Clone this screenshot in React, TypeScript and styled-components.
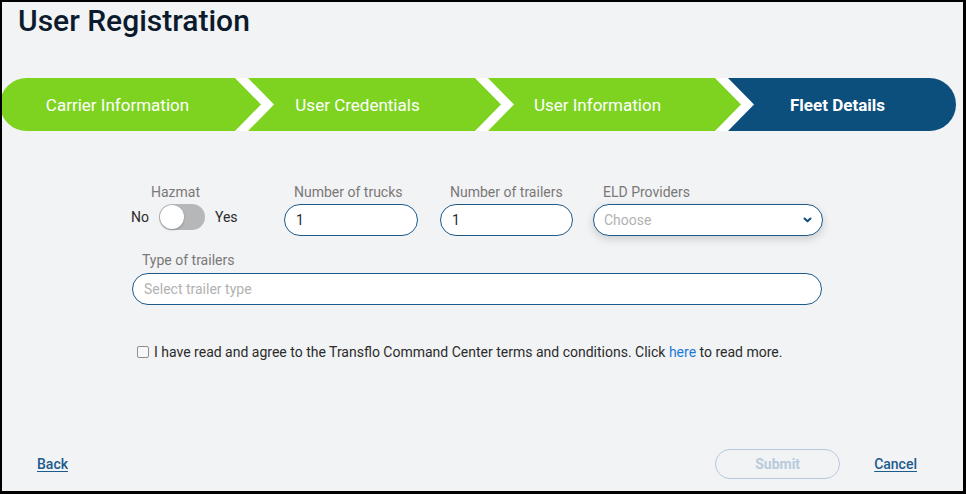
import React from "react";
import styled, { createGlobalStyle } from "styled-components";

// colours taken from the screen
const C = {
  page: "#f2f3f5",
  green: "#7ed321",
  navy: "#0c4e7c",
  border: "#1d5a8a",
  label: "#7a7877",
  text: "#2b2b2b",
  placeholder: "#b2b2b2",
  link: "#1c5b8d",
  linkBlue: "#1a7ad6",
  disabled: "#b6cadd",
};

const GlobalStyle = createGlobalStyle`
  html, body {
    margin: 0;
    padding: 0;
    background: ${C.page};
  }
  body {
    font-family: Roboto, "Liberation Sans", Arial, sans-serif;
    -webkit-font-smoothing: antialiased;
  }
`;

const Frame = styled.div`
  width: 966px;
  height: 494px;
  box-sizing: border-box;
  border: 2px solid #000;
  border-right-width: 3px;
  border-bottom-width: 3px;
  background: ${C.page};
  display: flex;
  flex-direction: column;
  overflow: hidden;
`;

const Title = styled.h1`
  margin: 0;
  padding: 2px 0 0 16px;
  font-size: 30px;
  line-height: 34px;
  font-weight: 500;
  color: #0b1a2c;
`;

// ---------- stepper ----------
const Stepper = styled.div`
  margin: 40px 0 0 -2px;
  width: 956px;
  height: 53px;
  display: flex;
  background: #fff;
  border-radius: 27px;
  overflow: hidden;
  flex-shrink: 0;
`;

type StepKind = "first" | "mid" | "last";

const CLIPS: Record<StepKind, string> = {
  first: "polygon(0 0, calc(100% - 26px) 0, 100% 50%, calc(100% - 26px) 100%, 0 100%)",
  mid: "polygon(0 0, calc(100% - 26px) 0, 100% 50%, calc(100% - 26px) 100%, 0 100%, 26px 50%)",
  last: "polygon(0 0, 100% 0, 100% 100%, 0 100%, 26px 50%)",
};

const PAD_RIGHT: Record<StepKind, number> = { first: 26, mid: 34, last: 22 };

const Step = styled.div<{ $w: number; $kind: StepKind; $active?: boolean }>`
  width: ${(p) => p.$w}px;
  flex-shrink: 0;
  height: 100%;
  margin-left: ${(p) => (p.$kind === "first" ? 0 : -13)}px;
  padding-right: ${(p) => PAD_RIGHT[p.$kind]}px;
  box-sizing: border-box;
  display: flex;
  align-items: center;
  justify-content: center;
  clip-path: ${(p) => CLIPS[p.$kind]};
  background: ${(p) => (p.$active ? C.navy : C.green)};
  color: #fff;
  font-size: 17px;
  font-weight: ${(p) => (p.$active ? 700 : 400)};
`;

// ---------- form ----------
const Form = styled.div`
  margin: 53px 0 0 129px;
  display: flex;
  flex-direction: column;
`;

const Row = styled.div<{ $mt?: number }>`
  display: flex;
  align-items: flex-start;
  margin-top: ${(p) => p.$mt ?? 0}px;
`;

const Field = styled.div<{ $w: number; $ml?: number }>`
  width: ${(p) => p.$w}px;
  margin-left: ${(p) => p.$ml ?? 0}px;
  display: flex;
  flex-direction: column;
`;

const Label = styled.label<{ $gap?: number }>`
  font-size: 14px;
  line-height: 16px;
  color: ${C.label};
  padding-left: 10px;
  margin-bottom: ${(p) => p.$gap ?? 4}px;
`;

const HazmatLabel = styled(Label)`
  padding-left: 20px;
`;

const TextInput = styled.input`
  width: 100%;
  height: 32px;
  box-sizing: border-box;
  border: 1px solid ${C.border};
  border-radius: 16px;
  background: #fff;
  padding: 0 11px;
  font-family: inherit;
  font-size: 14px;
  color: ${C.text};
  outline: none;

  &::placeholder {
    color: ${C.placeholder};
  }
`;

const SelectBox = styled.div`
  height: 32px;
  box-sizing: border-box;
  border: 1px solid ${C.border};
  border-radius: 16px;
  background: #fff;
  padding: 0 10px 0 10px;
  display: flex;
  align-items: center;
  justify-content: space-between;
  font-size: 14px;
  color: ${C.placeholder};
  box-shadow: 0 3px 8px rgba(0, 0, 0, 0.16);
`;

const ToggleRow = styled.div`
  display: flex;
  align-items: center;
  gap: 10px;
  height: 26px;
  font-size: 14px;
  color: ${C.text};
`;

const Track = styled.div<{ $on?: boolean }>`
  width: 46px;
  height: 26px;
  box-sizing: border-box;
  padding: 1px;
  border-radius: 13px;
  background: #b5b7b9;
  display: flex;
  align-items: center;
  justify-content: ${(p) => (p.$on ? "flex-end" : "flex-start")};
`;

const Knob = styled.div`
  width: 24px;
  height: 24px;
  border-radius: 50%;
  background: #fff;
  box-shadow: 0 1px 2px rgba(0, 0, 0, 0.25);
`;

const Agree = styled.div`
  margin: 39px 0 0 6px;
  display: flex;
  align-items: center;
  gap: 5px;
  font-size: 14px;
  line-height: 16px;
  color: ${C.text};
`;

const CheckBox = styled.span`
  width: 12px;
  height: 12px;
  box-sizing: border-box;
  border: 1px solid #8d8d8d;
  border-radius: 2px;
  background: #f7f7f7;
`;

const InlineLink = styled.a`
  color: ${C.linkBlue};
  text-decoration: none;
`;

// ---------- footer ----------
const Footer = styled.div`
  margin-top: auto;
  display: flex;
  align-items: center;
  padding: 0 46px 12px 35px;
`;

const TextLink = styled.a`
  font-size: 14px;
  font-weight: 500;
  color: ${C.link};
  text-decoration: underline;
  text-underline-offset: 2px;
`;

const SubmitButton = styled.button`
  margin-left: auto;
  margin-right: 34px;
  width: 125px;
  height: 30px;
  border: 1px solid ${C.disabled};
  border-radius: 15px;
  background: transparent;
  font-family: inherit;
  font-size: 14px;
  font-weight: 700;
  color: #b8cadb;
`;

const Chevron = () => (
  <svg width="9" height="6" viewBox="0 0 9 6">
    <path d="M1.5 1.5 L4.5 4.3 L7.5 1.5" fill="none" stroke={C.navy} strokeWidth="2" strokeLinecap="round" strokeLinejoin="round" />
  </svg>
);

const steps: { label: string; w: number; kind: StepKind; active?: boolean }[] = [
  { label: "Carrier Information", w: 261, kind: "first" },
  { label: "User Credentials", w: 253, kind: "mid" },
  { label: "User Information", w: 253, kind: "mid" },
  { label: "Fleet Details", w: 241, kind: "last", active: true },
];

export default function App() {
  return (
    <>
      <GlobalStyle />
      <Frame>
        <Title>User Registration</Title>

        <Stepper>
          {steps.map((s) => (
            <Step key={s.label} $w={s.w} $kind={s.kind} $active={s.active}>
              {s.label}
            </Step>
          ))}
        </Stepper>

        <Form>
          <Row>
            <Field $w={107}>
              <HazmatLabel>Hazmat</HazmatLabel>
              <ToggleRow>
                <span>No</span>
                <Track>
                  <Knob />
                </Track>
                <span>Yes</span>
              </ToggleRow>
            </Field>
            <Field $w={134} $ml={46}>
              <Label>Number of trucks</Label>
              <TextInput defaultValue="1" />
            </Field>
            <Field $w={133} $ml={22}>
              <Label>Number of trailers</Label>
              <TextInput defaultValue="1" />
            </Field>
            <Field $w={230} $ml={20}>
              <Label>ELD Providers</Label>
              <SelectBox>
                <span>Choose</span>
                <Chevron />
              </SelectBox>
            </Field>
          </Row>

          <Row $mt={16}>
            <Field $w={690} $ml={1}>
              <Label $gap={5}>Type of trailers</Label>
              <TextInput placeholder="Select trailer type" />
            </Field>
          </Row>

          <Agree>
            <CheckBox />
            <span>
              I have read and agree to the Transflo Command Center terms and conditions. Click{" "}
              <InlineLink>here</InlineLink> to read more.
            </span>
          </Agree>
        </Form>

        <Footer>
          <TextLink>Back</TextLink>
          <SubmitButton disabled>Submit</SubmitButton>
          <TextLink>Cancel</TextLink>
        </Footer>
      </Frame>
    </>
  );
}
